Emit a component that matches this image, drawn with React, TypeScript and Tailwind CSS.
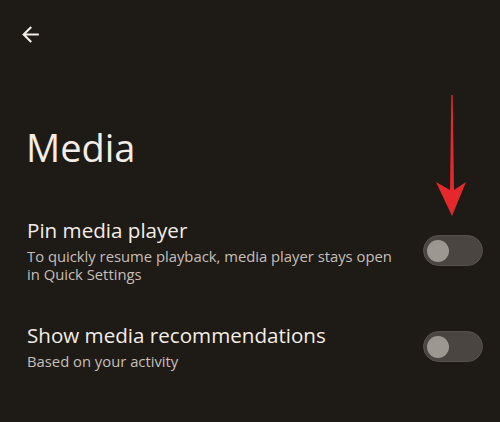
const font = { fontFamily: "'Open Sans', Roboto, sans-serif" };

function Toggle() {
  return (
    <div className="w-[60px] h-[31px] shrink-0 rounded-full bg-[#4a4541] border border-[#57524d] flex items-center pl-[3px]">
      <div className="w-[22px] h-[22px] rounded-full bg-[#9d9792]" />
    </div>
  );
}

function SettingRow({ title, subtitle }: { title: string; subtitle: string }) {
  return (
    <div className="flex items-center pl-[27px] pr-[17px] gap-[20px]">
      <div className="flex-1 flex flex-col">
        <p className="text-[20.6px] leading-[24px] text-[#f3ede6]">{title}</p>
        <p className="mt-[5px] text-[14.8px] leading-[18px] text-[#c6bfb7]">{subtitle}</p>
      </div>
      <Toggle />
    </div>
  );
}

export default function App() {
  return (
    <div className="relative w-[500px] h-[422px] overflow-hidden bg-[#1e1b17]" style={font}>
      <div className="pt-[22px] pl-[18px]">
        <svg width="25" height="25" viewBox="0 0 24 24" fill="#f3ede6">
          <path d="M20 11H7.83l5.59-5.59L12 4l-8 8 8 8 1.41-1.41L7.83 13H20v-2z" />
        </svg>
      </div>
      <h1 className="mt-[77px] pl-[26px] text-[38px] leading-[46px] text-[#f3ede6]">Media</h1>
      <div className="mt-[48px] flex flex-col gap-[40px]">
        <SettingRow
          title="Pin media player"
          subtitle="To quickly resume playback, media player stays open in Quick Settings"
        />
        <SettingRow title="Show media recommendations" subtitle="Based on your activity" />
      </div>
      <svg className="absolute left-[432px] top-[90px]" width="40" height="130" viewBox="0 0 40 130">
        <polygon
          points="19.3,5 20.7,5 22,100 34,92 20,126 4,92 18,100"
          fill="#e4282b"
        />
      </svg>
    </div>
  );
}
